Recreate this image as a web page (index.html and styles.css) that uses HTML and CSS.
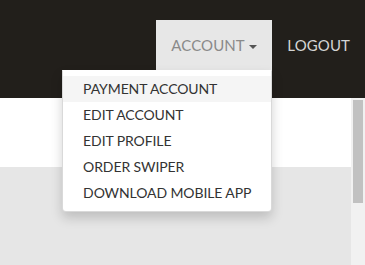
FILE: index.html
```html
<!DOCTYPE html>
<html>
<head>
<meta charset="utf-8">
<link rel="stylesheet" href="styles.css">
</head>
<body>
<header class="navbar">
  <ul class="nav">
    <li class="nav-item dropdown">
      <a class="nav-link active" href="#">ACCOUNT <span class="caret"></span></a>
      <ul class="dropdown-menu">
        <li><a class="menu-item hover" href="#">PAYMENT ACCOUNT</a></li>
        <li><a class="menu-item" href="#">EDIT ACCOUNT</a></li>
        <li><a class="menu-item" href="#">EDIT PROFILE</a></li>
        <li><a class="menu-item" href="#">ORDER SWIPER</a></li>
        <li><a class="menu-item" href="#">DOWNLOAD MOBILE APP</a></li>
      </ul>
    </li>
    <li class="nav-item"><a class="nav-link" href="#">LOGOUT</a></li>
  </ul>
</header>
<div class="page">
  <main class="content">
    <div class="hero"></div>
    <div class="band"></div>
  </main>
  <div class="scrollbar"><div class="thumb"></div></div>
</div>
</body>
</html>
```
FILE: styles.css
```css
html, body {
  margin: 0;
  padding: 0;
  height: 265px;
  overflow: hidden;
}
body {
  font-family: Lato, "Open Sans", sans-serif;
  font-size: 14px;
  background: #ffffff;
}
.navbar {
  position: relative;
  z-index: 10;
  height: 98px;
  background: #221f1b;
  display: flex;
  justify-content: flex-end;
}
.nav {
  list-style: none;
  margin: 20px 0 0;
  padding: 0;
  display: flex;
  align-items: flex-start;
}
.nav-item {
  position: relative;
}
.nav-link {
  display: block;
  padding: 15px 15px;
  line-height: 20px;
  font-size: 15px;
  letter-spacing: 0.1px;
  color: #d4d4d4;
  text-decoration: none;
}
.nav-link.active {
  background: #e7e7e7;
  color: #8a8a8a;
}
.caret {
  display: inline-block;
  width: 0;
  height: 0;
  margin-left: 1px;
  vertical-align: middle;
  border-top: 4px solid #555;
  border-left: 4px solid transparent;
  border-right: 4px solid transparent;
}
.dropdown-menu {
  position: absolute;
  top: 100%;
  right: 0;
  list-style: none;
  margin: 0;
  padding: 5px 0;
  background: #fff;
  border: 1px solid rgba(0,0,0,0.15);
  border-top-color: transparent;
  border-radius: 0 0 4px 4px;
  box-shadow: 0 6px 12px rgba(0,0,0,0.175);
  white-space: nowrap;
}
.menu-item {
  display: block;
  padding: 3px 20px;
  line-height: 20px;
  font-size: 14px;
  letter-spacing: -0.1px;
  color: #333;
  text-decoration: none;
}
.menu-item.hover {
  background: #f5f5f5;
}
.page {
  display: flex;
  height: 167px;
}
.content {
  flex: 1;
  display: flex;
  flex-direction: column;
}
.hero {
  height: 69px;
  background: #fff;
}
.band {
  flex: 1;
  background: #e6e6e6;
}
.scrollbar {
  width: 14px;
  background: #f1f1f1;
  padding: 2px 2px 0;
  box-sizing: border-box;
}
.thumb {
  height: 103px;
  background: #c1c1c1;
}
```
